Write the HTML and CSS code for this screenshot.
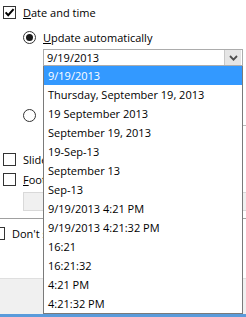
FILE: index.html
```html
<!DOCTYPE html>
<html>
<head>
<meta charset="utf-8">
<link rel="stylesheet" href="styles.css">
</head>
<body>
<div class="page">
  <div class="content">
    <div class="opt opt-top">
      <span class="cb"><svg viewBox="0 0 11 11" width="11" height="11"><path d="M1.6 5.4 L4.2 8.2 L9.6 2.2" fill="none" stroke="#000" stroke-width="2"/></svg></span>
      <span class="lbl"><u>D</u>ate and time</span>
    </div>
    <div class="opt opt-radio1">
      <span class="rb on"></span>
      <span class="lbl"><u>U</u>pdate automatically</span>
    </div>
    <div class="combo">
      <span class="combo-text">9/19/2013</span>
      <span class="combo-btn"><svg width="9" height="6" viewBox="0 0 9 6"><path d="M1 1 L4.5 4.6 L8 1" fill="none" stroke="#4d4d4d" stroke-width="1.8"/></svg></span>
    </div>
    <div class="opt opt-radio2">
      <span class="rb"></span>
    </div>
    <div class="fixed-line"></div>
    <div class="opt opt-slide">
      <span class="cb"></span>
      <span class="lbl clip">Slide number</span>
    </div>
    <div class="opt opt-footer">
      <span class="cb"></span>
      <span class="lbl clip"><u>F</u>ooter</span>
    </div>
    <div class="footer-box"></div>
    <div class="sep"></div>
    <div class="opt opt-dont">
      <span class="cb"></span>
      <span class="lbl clip-wide">Don't show on title slide</span>
    </div>
  </div>
  <div class="bar"></div>
  <div class="accent"></div>

  <ul class="list">
    <li class="sel">9/19/2013</li>
    <li>Thursday, September 19, 2013</li>
    <li>19 September 2013</li>
    <li>September 19, 2013</li>
    <li>19-Sep-13</li>
    <li>September 13</li>
    <li>Sep-13</li>
    <li>9/19/2013 4:21 PM</li>
    <li>9/19/2013 4:21:32 PM</li>
    <li>16:21</li>
    <li>16:21:32</li>
    <li>4:21 PM</li>
    <li>4:21:32 PM</li>
  </ul>
</div>
</body>
</html>
```

FILE: styles.css
```css
* { box-sizing: border-box; }

html, body {
  margin: 0;
  padding: 0;
  background: #ffffff;
}

body {
  font-family: "Open Sans", "Liberation Sans", sans-serif;
  font-size: 11px;
  color: #000000;
}

.page {
  position: relative;
  width: 246px;
  height: 317px;
  overflow: hidden;
  background: #ffffff;
}

.content {
  padding-top: 6px;
}

.opt {
  display: flex;
  align-items: center;
  height: 13px;
  line-height: 13px;
  white-space: nowrap;
}

.lbl u { text-decoration: underline; text-underline-offset: 1px; }

.clip {
  width: 20px;
  overflow: hidden;
}

.clip-wide {
  width: 31px;
  overflow: hidden;
}

.cb {
  flex: none;
  width: 13px;
  height: 13px;
  border: 1px solid #333333;
  background: #ffffff;
  display: flex;
  align-items: center;
  justify-content: center;
}

.cb svg { display: block; }

.rb {
  flex: none;
  width: 13px;
  height: 13px;
  border: 1px solid #333333;
  border-radius: 50%;
  background: #ffffff;
  display: flex;
  align-items: center;
  justify-content: center;
}

.rb.on::after {
  content: "";
  width: 7px;
  height: 7px;
  border-radius: 50%;
  background: #1a1a1a;
}

.opt-top { padding-left: 3px; gap: 7px; }

.opt-radio1 { margin-top: 12px; padding-left: 23px; gap: 7px; }

.combo {
  margin-top: 5px;
  margin-left: 43px;
  width: 200px;
  height: 17px;
  border: 1px solid #acacac;
  background: #ffffff;
  display: flex;
  align-items: center;
  padding-left: 3px;
  padding-right: 1px;
}

.combo-text { flex: 1; line-height: 15px; }

.combo-btn {
  flex: none;
  width: 17px;
  height: 15px;
  background: #e5e5e5;
  border-left: 1px solid #c8c8c8;
  display: flex;
  align-items: center;
  justify-content: center;
}

.combo-btn svg { display: block; }

.opt-radio2 { margin-top: 43px; padding-left: 23px; gap: 7px; }

.fixed-line {
  margin-top: 3px;
  margin-left: 43px;
  height: 1px;
  background: #bcbcbc;
}

.opt-slide { margin-top: 27px; padding-left: 3px; gap: 7px; }

.opt-footer { margin-top: 7px; padding-left: 3px; gap: 7px; }

.footer-box {
  margin-top: 6px;
  margin-left: 23px;
  width: 240px;
  height: 19px;
  border: 1px solid #d9d9d9;
  background: #f0f0f0;
}

.sep {
  margin-top: 7px;
  height: 1px;
  background: #a0a0a0;
}

.opt-dont { margin-top: 8px; margin-left: -8px; gap: 7px; }

.bar {
  margin-top: 38px;
  height: 36px;
  border-top: 1px solid #dfdfdf;
  background: #f0f0f0;
}

.accent {
  height: 3px;
  background: #5a9bdb;
}

.list {
  position: absolute;
  left: 43px;
  top: 66px;
  width: 200px;
  margin: 0;
  padding: 0;
  list-style: none;
  background: #ffffff;
  border: 1px solid #7a7a7a;
  border-top: none;
}

.list li {
  height: 19px;
  line-height: 19px;
  padding-left: 4px;
  white-space: nowrap;
}

.list li.sel {
  background: #3399ff;
  color: #ffffff;
}
```
